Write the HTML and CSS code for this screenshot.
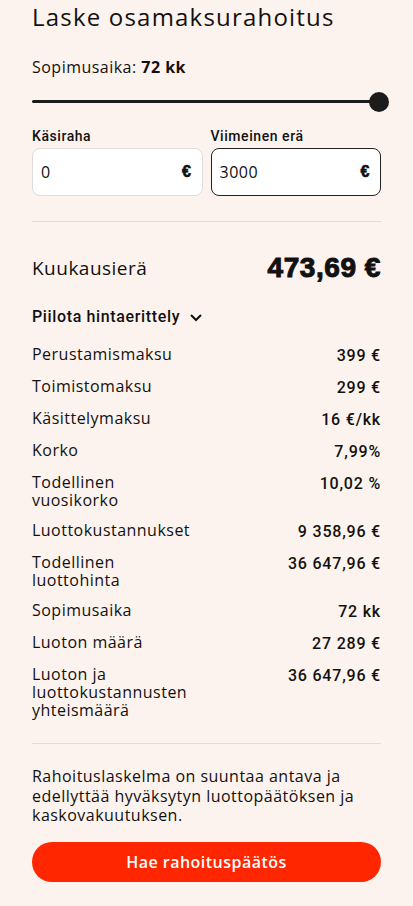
FILE: index.html
```html
<!DOCTYPE html>
<html lang="fi">

<head>
    <meta charset="UTF-8">
    <meta name="viewport" content="width=device-width, initial-scale=1.0">
    <title>Laske osamaksurahoitus</title>
    <link rel="stylesheet" href="styles.css">
</head>

<body>
    <div class="calc">
        <h2 class="calc-title">Laske osamaksurahoitus</h2>

        <div class="term">
            <p class="term-label">Sopimusaika: <strong>72 kk</strong></p>
            <div class="slider">
                <div class="slider-track"></div>
                <div class="slider-thumb"></div>
            </div>
        </div>

        <div class="fields">
            <label class="field">
                <span class="field-label">Käsiraha</span>
                <span class="field-box">
                    <input type="text" value="0">
                    <span class="field-unit">€</span>
                </span>
            </label>
            <label class="field">
                <span class="field-label">Viimeinen erä</span>
                <span class="field-box active">
                    <input type="text" value="3000">
                    <span class="field-unit">€</span>
                </span>
            </label>
        </div>

        <hr class="divider">

        <div class="monthly">
            <span class="monthly-label">Kuukausierä</span>
            <span class="monthly-value">473,69 €</span>
        </div>

        <button class="toggle">
            Piilota hintaerittely
            <svg width="16" height="16" viewBox="0 0 16 16" fill="none" stroke="#111" stroke-width="2">
                <path d="M3 6l5 5 5-5" />
            </svg>
        </button>

        <dl class="details">
            <div class="row"><dt>Perustamismaksu</dt><dd>399 €</dd></div>
            <div class="row"><dt>Toimistomaksu</dt><dd>299 €</dd></div>
            <div class="row"><dt>Käsittelymaksu</dt><dd>16 €/kk</dd></div>
            <div class="row"><dt>Korko</dt><dd>7,99%</dd></div>
            <div class="row"><dt>Todellinen vuosikorko</dt><dd>10,02 %</dd></div>
            <div class="row"><dt>Luottokustannukset</dt><dd>9 358,96 €</dd></div>
            <div class="row"><dt>Todellinen luottohinta</dt><dd>36 647,96 €</dd></div>
            <div class="row"><dt>Sopimusaika</dt><dd>72 kk</dd></div>
            <div class="row"><dt>Luoton määrä</dt><dd>27 289 €</dd></div>
            <div class="row"><dt>Luoton ja luottokustannusten yhteismäärä</dt><dd>36 647,96 €</dd></div>
        </dl>

        <hr class="divider divider-bottom">

        <p class="note">Rahoituslaskelma on suuntaa antava ja edellyttää hyväksytyn luottopäätöksen ja kaskovakuutuksen.</p>

        <button class="cta">Hae rahoituspäätös</button>
    </div>
</body>

</html>
```

FILE: styles.css
```css
* {
    margin: 0;
    padding: 0;
    box-sizing: border-box;
}

body {
    font-family: 'Open Sans', sans-serif;
    letter-spacing: 0.03em;
    background-color: #fdf3ee;
    color: #111;
}

.calc {
    padding: 0 32px 40px 32px;
    display: flex;
    flex-direction: column;
}

.calc-title {
    font-size: 24px;
    font-weight: 400;
    letter-spacing: 0.05em;
    line-height: normal;
}

.term {
    margin-top: 22px;
}

.term-label {
    font-size: 16px;
    line-height: 24px;
}

.term-label strong {
    font-weight: 700;
}

.slider {
    position: relative;
    height: 20px;
    margin-top: 13px;
}

.slider-track {
    position: absolute;
    left: 0;
    right: 0;
    top: 8px;
    height: 3px;
    background-color: #1c1c1c;
    border-radius: 2px;
}

.slider-thumb {
    position: absolute;
    right: -8px;
    top: 0;
    width: 20px;
    height: 20px;
    border-radius: 50%;
    background-color: #1c1c1c;
}

.fields {
    display: grid;
    grid-template-columns: minmax(0, 1fr) minmax(0, 1fr);
    gap: 8px;
    margin-top: 15px;
}

.field {
    display: flex;
    flex-direction: column;
    gap: 3px;
    min-width: 0;
}

.field-label {
    font-family: Roboto, sans-serif;
    font-size: 14px;
    font-weight: 500;
    letter-spacing: 0.04em;
    line-height: 18px;
}

.field-box {
    display: flex;
    align-items: center;
    height: 48px;
    background-color: #fff;
    border: 1px solid #ddd;
    border-radius: 8px;
    padding: 0 10px 0 8px;
}

.field-box.active {
    border-color: #222;
}

.field-box input {
    flex: 1;
    width: 0;
    min-width: 0;
    border: none;
    outline: none;
    background: transparent;
    font-family: inherit;
    letter-spacing: 0.03em;
    font-size: 16px;
    color: #111;
}

.field-unit {
    font-family: 'Liberation Sans', Arial, sans-serif;
    font-weight: 700;
    font-size: 16px;
    -webkit-text-stroke: 0.6px #111;
}

.divider {
    border: none;
    border-top: 1px solid #ddd;
    margin-top: 25px;
}

.monthly {
    display: flex;
    justify-content: space-between;
    align-items: center;
    margin-top: 30px;
}

.monthly-label {
    font-size: 19px;
}

.monthly-value {
    font-family: 'Liberation Sans', Arial, sans-serif;
    font-weight: 700;
    font-size: 28px;
    letter-spacing: 0.02em;
    -webkit-text-stroke: 1px #111;
}

.toggle {
    display: flex;
    align-items: center;
    gap: 8px;
    border: none;
    background: none;
    font-family: Roboto, sans-serif;
    letter-spacing: 0.04em;
    font-size: 16px;
    font-weight: 500;
    color: #111;
    margin-top: 23px;
    align-self: flex-start;
}

.details {
    display: flex;
    flex-direction: column;
    gap: 12px;
    margin-top: 19px;
}

.row {
    display: flex;
    justify-content: space-between;
    gap: 20px;
    font-size: 16px;
    line-height: 18px;
}

.row dt {
    max-width: 170px;
}

.row dd {
    font-family: Roboto, sans-serif;
    font-weight: 500;
    letter-spacing: 0.05em;
    text-align: right;
    white-space: nowrap;
    padding-top: 2px;
}

.divider-bottom {
    margin-top: 24px;
}

.note {
    font-size: 16px;
    line-height: 19.5px;
    margin-top: 23px;
}

.cta {
    margin-top: 16px;
    height: 40px;
    border: none;
    border-radius: 20px;
    background-color: #ff2600;
    color: #fff;
    font-family: inherit;
    letter-spacing: 0.03em;
    font-size: 16px;
    font-weight: 600;
}
```
